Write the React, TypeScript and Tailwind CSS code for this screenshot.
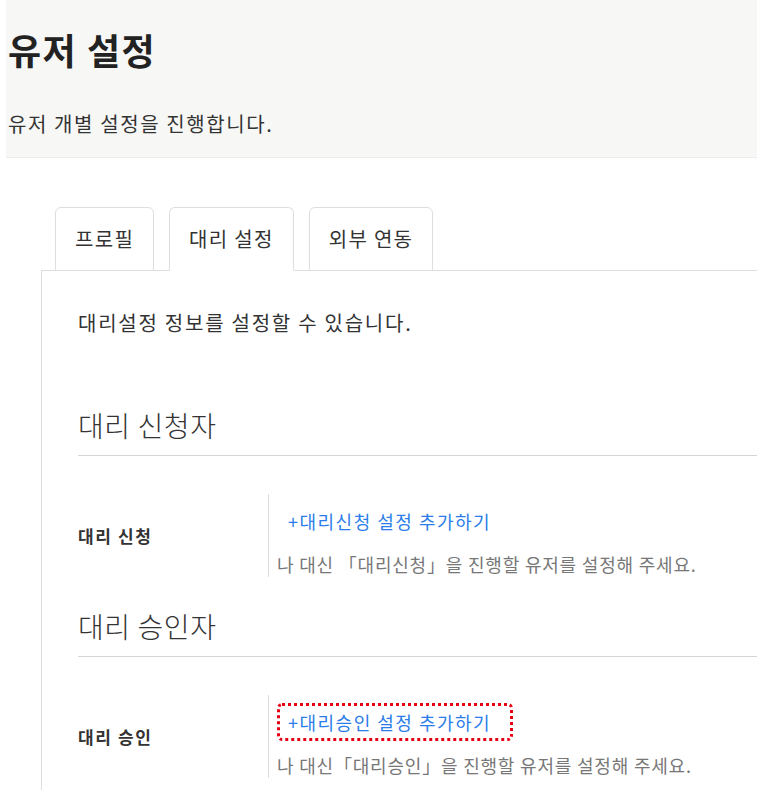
const TABS = ['프로필', '대리 설정', '외부 연동']
const ACTIVE_TAB = 1

interface ProxySection {
  title: string
  label: string
  link: string
  desc: string
  highlight?: boolean
}

const SECTIONS: ProxySection[] = [
  {
    title: '대리 신청자',
    label: '대리 신청',
    link: '대리신청 설정 추가하기',
    desc: '나 대신 「대리신청」을 진행할 유저를 설정해 주세요.',
  },
  {
    title: '대리 승인자',
    label: '대리 승인',
    link: '대리승인 설정 추가하기',
    desc: '나 대신「대리승인」을 진행할 유저를 설정해 주세요.',
    highlight: true,
  },
]

function Section({ section }: { section: ProxySection }) {
  return (
    <div>
      <h2 className="pb-[12px] border-b border-[#d4d4d4] text-[28px] leading-[36px] font-light tracking-[0.6px] text-[#333]">
        {section.title}
      </h2>
      <div className="mt-[38px] flex">
        <div className="w-[190px] flex items-center text-[17px] font-bold tracking-[1.6px] text-[#333]">
          {section.label}
        </div>
        <div className="border-l border-[#dcdcdc] pt-[8px] pl-[8px] pb-[2px]">
          <a
            href="#"
            className={
              section.highlight
                ? 'inline-block border-[3px] border-dotted border-[#e60012] rounded-[5px] pl-[8px] pr-[19px] text-[18px] leading-[32px] tracking-[1.5px] text-[#2b7de9]'
                : 'inline-block border-[3px] border-transparent pl-[8px] pr-[19px] text-[18px] leading-[32px] tracking-[1.5px] text-[#2b7de9]'
            }
          >
            +{section.link}
          </a>
          <p className="mt-[13px] text-[18px] leading-[22px] tracking-[0.8px] text-[#777]">{section.desc}</p>
        </div>
      </div>
    </div>
  )
}

export default function App() {
  return (
    <div className="min-h-[792px] bg-white font-['Noto_Sans_CJK_KR','Noto_Sans',sans-serif] text-[#333]">
      <header className="ml-[6px] bg-[#f7f7f6] border-b border-[#ececec] pt-[28px] pb-[20px] pl-[2px]">
        <h1 className="text-[36px] leading-[42px] font-bold tracking-[1.5px] text-[#222]">유저 설정</h1>
        <p className="mt-[41px] text-[20px] leading-[26px] tracking-[1.6px] text-[#333]">
          유저 개별 설정을 진행합니다.
        </p>
      </header>

      <div className="mt-[49px] ml-[55px] flex gap-[15px] relative z-10 -mb-px">
        {TABS.map((tab, i) => (
          <div
            key={tab}
            className={
              i === ACTIVE_TAB
                ? 'h-[64px] px-[19px] flex items-center border border-[#dedede] border-b-white bg-white rounded-t-[6px] text-[20px] tracking-[1.3px] text-[#333]'
                : 'h-[64px] px-[19px] flex items-center border border-[#dedede] bg-white rounded-t-[6px] text-[20px] tracking-[1.3px] text-[#333]'
            }
          >
            {tab}
          </div>
        ))}
      </div>

      <div className="ml-[41px] border-l border-t border-[#dedede] pl-[36px] pt-[38px] pb-[12px]">
        <p className="text-[20px] leading-[28px] tracking-[1.75px] text-[#333]">대리설정 정보를 설정할 수 있습니다.</p>
        <div className="mt-[70px]">
          <Section section={SECTIONS[0]} />
        </div>
        <div className="mt-[31px]">
          <Section section={SECTIONS[1]} />
        </div>
      </div>
    </div>
  )
}
